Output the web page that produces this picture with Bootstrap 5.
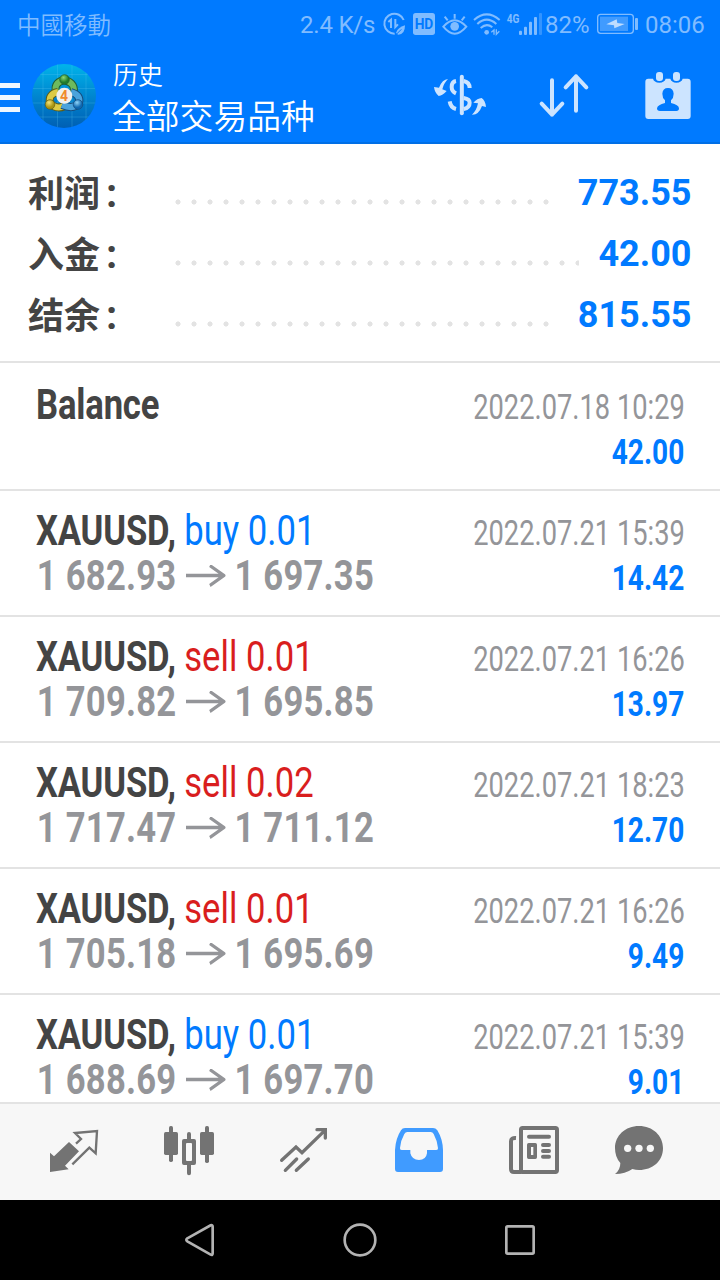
<!DOCTYPE html>
<html lang="zh">
<head>
<meta charset="utf-8">
<meta name="viewport" content="width=device-width, initial-scale=1">
<title>历史</title>
<link href="https://cdn.jsdelivr.net/npm/bootstrap@5.3.0/dist/css/bootstrap.min.css" rel="stylesheet">
<style>
body{font-family:Roboto,"Noto Sans CJK SC",sans-serif;background:#fff;color:#444}
svg{display:block;flex:none}
.screen{width:720px;height:1280px}
.topbar{background:#007aff;height:144px;border-bottom:2px solid #006fe6}
.status{height:48px;padding:0 0 0 17px;color:#80bcff;font-size:24px;line-height:51px}
.carrier{font-family:"Noto Sans CJK TC",sans-serif;font-size:23.5px;font-weight:350;line-height:49px}
.w-speed{width:80px;letter-spacing:-.2px}.w-pct{width:49px}.w-time{width:78px;padding-left:3px}
.status svg{margin-top:9px;fill:#80bcff}
.appbar{height:94px;color:#fff;padding-right:25px}
.burger{width:20px;margin:35px 12px 0 0}
.burger i{display:block;height:5px;background:#eef6ff;margin-bottom:7px}
.burger i:last-child{margin:0}
.logo{margin-top:16px}
.heading{margin-left:16px;font-weight:350}
.sub-title{font-size:25px;line-height:36px;margin-top:10px;padding-left:1px}
.main-title{font-size:33.8px;line-height:48px}
.tools{gap:45px;padding-top:22px}
.tools svg{fill:#cce4ff;stroke:#cce4ff}
.summary{padding:19px 28.5px 15px 28px;border-bottom:2px solid #e3e3e3}
.sum-row{height:61px;line-height:61px;font-size:36px;font-weight:700}
.sum-label{width:141.5px;padding-top:4px}
.colon{margin-left:6px;font-size:40px;line-height:1}
.leader{height:6px;margin:17px 19px 0 0;background:radial-gradient(circle,#e3e3e3 2.2px,transparent 2.9px) 0 0/16px 6px repeat-x}
.val{color:#007aff}
.deal{height:126px;padding:17px 36px 0;border-bottom:2px solid #e3e3e3;line-height:45px}
.deal.first{height:128px;padding-top:19px}
.deal-l{flex:1 1 0;min-width:0}
.deal-r{flex:none}
.symbol,.prices{transform:scaleX(.824);transform-origin:0 0;white-space:nowrap;font-size:42px;font-weight:700}
.symbol{letter-spacing:-.2px}
.side{font-weight:400;letter-spacing:.05px}
.prices{color:#949599;padding-left:1px;letter-spacing:.27px}
.prices svg{display:inline-block;vertical-align:1px;margin-left:1px}
.buy{color:#007aff}.sell{color:#d91e1e}
.stamp,.profit{transform-origin:100% 0;font-size:34.5px;white-space:nowrap}
.stamp{transform:translateX(1px) scaleX(.79);color:#949599;margin-top:2.5px}
.profit{transform:translateX(.5px) scaleX(.813);font-weight:700;color:#007aff}
.tabs{height:98px;background:#f7f7f7;border-top:2px solid #e3e3e3;padding:16px 0 0 44px;gap:55px}
.tabs svg{fill:#737373;stroke:none}
.tabs svg:last-child{margin-left:-10px}
.keys{height:80px;background:#000;gap:100px}
.keys svg{fill:none;stroke:#b3b3b3;stroke-width:8}
</style>
</head>
<body>
<div class="screen d-flex flex-column overflow-hidden">
<header class="topbar flex-shrink-0">
 <div class="status d-flex">
  <span class="carrier me-auto">中國移動</span>
  <span class="w-speed text-nowrap">2.4 K/s</span>
  <svg width="28" height="30" viewBox="270 27 84 90"><path d="M341 60A30 30 0 1 0 314 101" fill="none" stroke="#80bcff" stroke-width="6"/><path d="M295 66l8-7v25M316 57v24l8-8" fill="none" stroke="#80bcff" stroke-width="6"/><path d="M345 76Q345 104 325 104Q318 103 319 97Q323 83 345 76Z"/><path d="M316 106l18-18" stroke="#007aff" stroke-width="3"/></svg>
  <svg width="32" height="30" viewBox="354 27 96 90"><rect x="369" y="39" width="66" height="66" rx="8"/><text x="402" y="88" text-anchor="middle" font-size="45" font-weight="700" textLength="56" lengthAdjust="spacingAndGlyphs" fill="#007aff">HD</text></svg>
  <svg width="30" height="30" viewBox="450 27 90 90"><path d="M460 80Q494 42 529 80Q494 122 460 80Z" fill="none" stroke="#80bcff" stroke-width="6"/><circle cx="494" cy="79" r="13"/><path d="M494 42v14M464 50l9 11M524 50l-9 11" stroke="#80bcff" stroke-width="6"/></svg>
  <svg width="34" height="30" viewBox="540 27 102 90"><path d="M552 60Q590 26 629 60M562 72Q590 46 619 72M572 84Q590 68 607 82" fill="none" stroke="#80bcff" stroke-width="6"/><circle cx="590" cy="97" r="7"/><path d="M604 97l8-7v14M619 88v15l9-9" fill="none" stroke="#80bcff" stroke-width="4"/></svg>
  <svg width="41" height="30" viewBox="12 27 123 90"><text x="20" y="69" font-size="40" font-weight="700" textLength="38" lengthAdjust="spacingAndGlyphs">4G</text><rect x="57" y="92" width="9" height="13" rx="3"/><rect x="72" y="80" width="9" height="25" rx="3"/><rect x="87" y="65" width="9" height="40" rx="3"/><rect x="102" y="51" width="9" height="54" rx="3"/><rect x="117" y="39" width="9" height="66" rx="3" opacity=".4"/></svg>
  <span class="w-pct text-nowrap">82%</span>
  <svg width="48" height="30" viewBox="282 27 144 90"><rect x="293" y="43" width="107" height="57" rx="9" fill="none" stroke="#80bcff" stroke-width="4"/><rect x="300" y="50" width="84" height="43" fill="#409bff"/><rect x="405" y="54" width="9" height="36" rx="3"/><path d="M350 58L319 73L342 76L343 85L374 72L352 69Z" fill="#bfddff"/></svg>
  <span class="w-time text-nowrap">08:06</span>
 </div>
 <div class="appbar d-flex">
  <div class="burger"><i></i><i></i><i></i></div>
  <svg class="logo" width="64" height="64" viewBox="32 64 64 64">
   <defs><linearGradient id="sky" x1="0" y1="0" x2="0" y2="1"><stop offset="0" stop-color="#00b4ea"/><stop offset=".5" stop-color="#0086cf"/><stop offset="1" stop-color="#005fb4"/></linearGradient>
   <radialGradient id="gr" cx=".4" cy=".3"><stop offset="0" stop-color="#8fd873"/><stop offset="1" stop-color="#1f7d2c"/></radialGradient>
   <radialGradient id="ye" cx=".4" cy=".3"><stop offset="0" stop-color="#f4e478"/><stop offset="1" stop-color="#a89412"/></radialGradient>
   <radialGradient id="bl" cx=".4" cy=".3"><stop offset="0" stop-color="#8fd4f8"/><stop offset="1" stop-color="#0f68b0"/></radialGradient>
   <clipPath id="disc"><circle cx="64" cy="96" r="32"/></clipPath></defs>
   <g clip-path="url(#disc)"><rect x="32" y="64" width="64" height="64" fill="url(#sky)"/><path d="M43 64v64M57.500 64v64M72 64v64M86 64v64M32 74.500h64M32 88.500h64M32 103h64M32 117h64" stroke="#5ac8f5" stroke-opacity=".25" stroke-width="1"/></g>
   <path d="M57 95Q52 83 64 80Q77 83 73 95" fill="none" stroke="#205d31" stroke-width="8"/><path d="M57 95Q52 83 64 80Q77 83 73 95" fill="none" stroke="#6dba5d" stroke-width="6"/>
   <path d="M58 92Q48 94 50 103Q56 110 65 106" fill="none" stroke="#5b5c18" stroke-width="8"/><path d="M58 92Q48 94 50 103Q56 110 65 106" fill="none" stroke="#dccb45" stroke-width="6"/>
   <path d="M71 92Q81 95 79 103Q74 110 62 105" fill="none" stroke="#164d7e" stroke-width="8"/><path d="M71 92Q81 95 79 103Q74 110 62 105" fill="none" stroke="#4ba3dc" stroke-width="6"/>
   <circle cx="64.500" cy="79.500" r="4.800" fill="url(#gr)" stroke="#1d5a2a" stroke-width=".7"/><circle cx="50" cy="104.500" r="4.800" fill="url(#ye)" stroke="#635a10" stroke-width=".7"/><circle cx="78" cy="104.500" r="4.800" fill="url(#bl)" stroke="#124b7c" stroke-width=".7"/>
   <circle cx="64.300" cy="95.800" r="8" fill="#f2f0ec"/><text x="64" y="101" text-anchor="middle" font-size="14" font-weight="700" fill="#f08b2c">4</text>
  </svg>
  <div class="heading me-auto text-nowrap"><div class="sub-title">历史</div><div class="main-title">全部交易品种</div></div>
  <div class="tools d-flex">
   <svg width="60" height="50" viewBox="30 60 180 150"><g fill="none" stroke-width="12"><path d="M125.500 80v110" stroke-linecap="round"/><path d="M108 93Q95 95 95 111Q95 124 108 130M131 93Q149 97 149 114M131 144Q149 147 149 158Q149 173 131 177M89 154Q92 173 108 177"/></g><path d="M84 87Q67 88 57 113L42 111Q44 128 56 138Q68 137 80 123L67 118Q71 100 84 87ZM156 194Q170 181 174 160L160 158Q172 145 185 144Q196 151 198 171L186 168Q176 195 156 194Z" stroke="none"/></svg>
   <svg width="60" height="50" viewBox="345 60 180 150"><path d="M396 91v103M365 161l31 33l31-33M468 182V79M437 112l31-33l31 33" fill="none" stroke-width="12" stroke-linecap="round" stroke-linejoin="round"/></svg>
   <svg width="55" height="50" viewBox="660 60 165 150"><g stroke="none"><path d="M685 86H699Q702 97 718 98Q734 97 737 86H751Q754 97 769 98Q785 97 788 86H803Q812 86 812 95V198Q812 207 803 207H685Q676 207 676 198V95Q676 86 685 86Z"/><rect x="708" y="66" width="21" height="27" rx="9"/><rect x="759" y="66" width="21" height="27" rx="9"/><path d="M744 114Q760 114 761 131Q761 144 753 151V159Q776 164 777 175Q777 183 769 183H720Q711 183 711 175Q713 164 735 159V151Q727 144 727 131Q728 114 744 114Z" fill="#007aff"/></g></svg>
  </div>
 </div>
</header>
<section class="summary flex-shrink-0">
 <div class="sum-row d-flex align-items-center"><span class="sum-label text-nowrap">利润<span class="colon">:</span></span><span class="leader flex-grow-1"></span><span class="val">773.55</span></div>
 <div class="sum-row d-flex align-items-center"><span class="sum-label text-nowrap">入金<span class="colon">:</span></span><span class="leader flex-grow-1"></span><span class="val">42.00</span></div>
 <div class="sum-row d-flex align-items-center"><span class="sum-label text-nowrap">结余<span class="colon">:</span></span><span class="leader flex-grow-1"></span><span class="val">815.55</span></div>
</section>
<main class="flex-grow-1 overflow-hidden" style="min-height:0">
 <div class="deal first d-flex"><div class="deal-l"><div class="symbol">Balance</div></div><div class="deal-r text-end"><div class="stamp">2022.07.18 10:29</div><div class="profit">42.00</div></div></div>
 <div class="deal d-flex"><div class="deal-l"><div class="symbol">XAUUSD, <span class="side buy">buy 0.01</span></div><div class="prices">1 682.93 <svg width="48" height="24" viewBox="0 0 48 24"><path d="M0 10.500H46M29 .500L46 10.500L29 20.500" fill="none" stroke="#949599" stroke-width="3.300"/></svg> 1 697.35</div></div><div class="deal-r text-end"><div class="stamp">2022.07.21 15:39</div><div class="profit">14.42</div></div></div>
 <div class="deal d-flex"><div class="deal-l"><div class="symbol">XAUUSD, <span class="side sell">sell 0.01</span></div><div class="prices">1 709.82 <svg width="48" height="24" viewBox="0 0 48 24"><path d="M0 10.500H46M29 .500L46 10.500L29 20.500" fill="none" stroke="#949599" stroke-width="3.300"/></svg> 1 695.85</div></div><div class="deal-r text-end"><div class="stamp">2022.07.21 16:26</div><div class="profit">13.97</div></div></div>
 <div class="deal d-flex"><div class="deal-l"><div class="symbol">XAUUSD, <span class="side sell">sell 0.02</span></div><div class="prices">1 717.47 <svg width="48" height="24" viewBox="0 0 48 24"><path d="M0 10.500H46M29 .500L46 10.500L29 20.500" fill="none" stroke="#949599" stroke-width="3.300"/></svg> 1 711.12</div></div><div class="deal-r text-end"><div class="stamp">2022.07.21 18:23</div><div class="profit">12.70</div></div></div>
 <div class="deal d-flex"><div class="deal-l"><div class="symbol">XAUUSD, <span class="side sell">sell 0.01</span></div><div class="prices">1 705.18 <svg width="48" height="24" viewBox="0 0 48 24"><path d="M0 10.500H46M29 .500L46 10.500L29 20.500" fill="none" stroke="#949599" stroke-width="3.300"/></svg> 1 695.69</div></div><div class="deal-r text-end"><div class="stamp">2022.07.21 16:26</div><div class="profit">9.49</div></div></div>
 <div class="deal d-flex"><div class="deal-l"><div class="symbol">XAUUSD, <span class="side buy">buy 0.01</span></div><div class="prices">1 688.69 <svg width="48" height="24" viewBox="0 0 48 24"><path d="M0 10.500H46M29 .500L46 10.500L29 20.500" fill="none" stroke="#949599" stroke-width="3.300"/></svg> 1 697.70</div></div><div class="deal-r text-end"><div class="stamp">2022.07.21 15:39</div><div class="profit">9.01</div></div></div>
</main>
<nav class="tabs d-flex flex-shrink-0">
 <svg width="60" height="60" viewBox="132 90 180 180"><path d="M150 188L162 199L207 156L237 184L195 227L206 238L150 246Z"/><path d="M228 161L243 147L225 129L291 123L287 190L268 173L217 223" fill="none" stroke="#737373" stroke-width="7"/></svg>
 <svg width="60" height="60" viewBox="477 90 180 180"><rect x="492" y="126" width="42" height="69" rx="5"/><rect x="507" y="108" width="12" height="108" rx="5"/><rect x="600" y="126" width="42" height="69" rx="5"/><rect x="615" y="108" width="12" height="111" rx="5"/><path d="M561 132q0-6 6-6t6 6v15h9q6 0 6 6v66q0 6-6 6h-9v25q0 6-6 6t-6-6v-25h-9q-6 0-6-6v-66q0-6 6-6h9Z"/><rect x="558" y="159" width="18" height="54" rx="3" fill="#f7f7f7"/></svg>
 <svg width="60" height="60" viewBox="822 90 180 180"><path d="M845 211L888 171L906 188L974 122M951 119H976V144M856 241L890 207M889 241L925 207" fill="none" stroke="#737373" stroke-width="10" stroke-linecap="round"/></svg>
 <svg width="60" height="60" viewBox="87 90 180 180"><path fill-rule="evenodd" d="M135 114H219Q227 114 232 121Q248 147 249 180V237Q249 246 240 246H114Q105 246 105 237V180Q107 145 123 121Q127 114 135 114ZM142 126Q136 126 133 132Q122 151 120 174Q119 180 125 180H151V190Q156 210 177 210Q198 210 201 190V180H229Q235 180 234 174Q231 150 221 132Q218 126 212 126Z" fill="#409bff"/></svg>
 <svg width="60" height="60" viewBox="432 90 180 180"><g fill="none" stroke="#737373" stroke-width="12" stroke-linejoin="round"><rect x="483" y="114" width="108" height="132" rx="5"/><path d="M468 144Q453 143 453 154V237Q453 246 462 246H485"/><path d="M507 140H567M549 165H567M549 183H567M549 200H567" stroke-linecap="round"/></g><path fill-rule="evenodd" d="M506 159h20q5 0 5 5v38q0 5-5 5h-20q-5 0-5-5v-38q0-5 5-5ZM513 171v24h7v-24Z"/></svg>
 <svg width="60" height="60" viewBox="747 90 180 180"><path d="M837 108C878 108 909 137 909 174C909 214 878 240 837 240Q827 240 817 237Q796 252 765 252Q781 240 781 219Q765 202 765 174C765 137 796 108 837 108Z"/><g fill="#f7f7f7"><circle cx="803" cy="175" r="11"/><circle cx="837" cy="175" r="11"/><circle cx="871" cy="175" r="11"/></g></svg>
</nav>
<footer class="keys d-flex justify-content-center align-items-center flex-shrink-0">
 <svg width="60" height="60" viewBox="510 360 180 180"><path d="M562 445L632 406Q638 404 638 410V490Q638 497 632 494L562 454Q556 450 562 445Z"/></svg>
 <svg width="60" height="60" viewBox="0 0 180 180"><circle cx="90" cy="90" r="46"/></svg>
 <svg width="60" height="60" viewBox="390 360 180 180"><rect x="439" y="409" width="82" height="82" rx="4"/></svg>
</footer>
</div>
<script src="https://cdn.jsdelivr.net/npm/bootstrap@5.3.0/dist/js/bootstrap.bundle.min.js"></script>
</body>
</html>
